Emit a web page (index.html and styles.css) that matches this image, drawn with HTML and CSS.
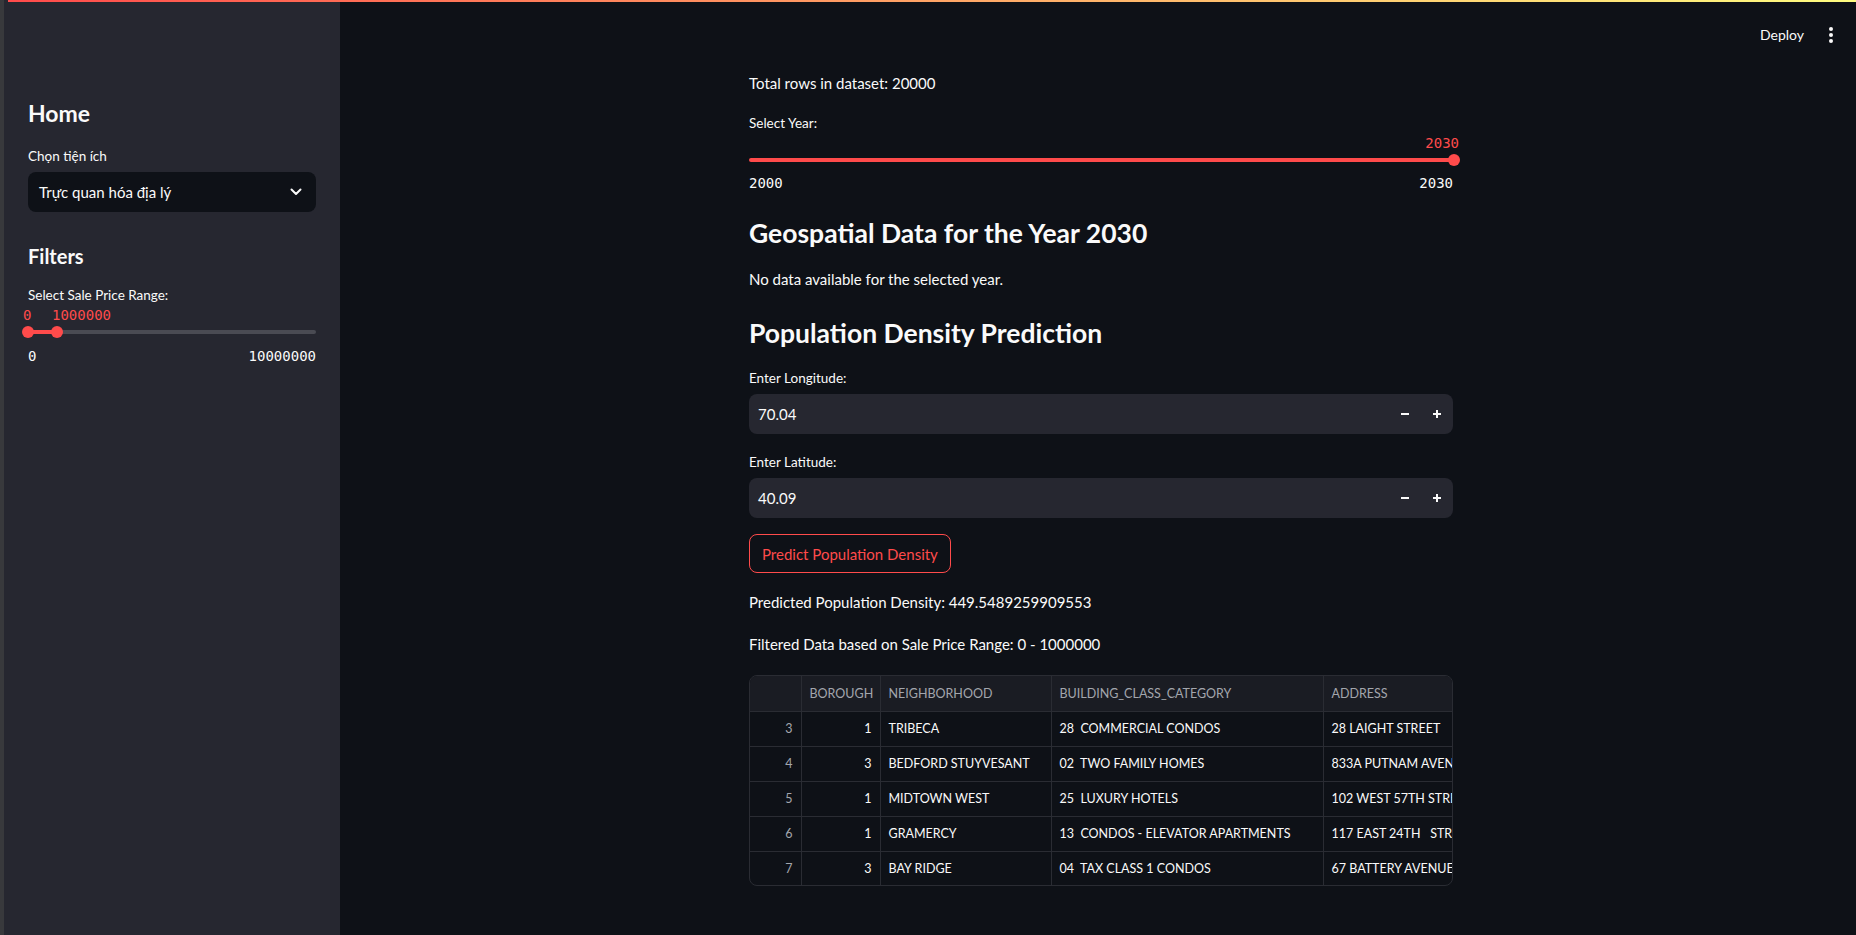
FILE: index.html
```html
<!DOCTYPE html>
<html lang="vi">
<head>
<meta charset="utf-8">
<title>Streamlit</title>
<link rel="stylesheet" href="styles.css">
</head>
<body>
<div class="decoration"></div>
<div class="app">
  <aside class="sidebar">
    <h2 class="side-title">Home</h2>
    <div class="widget-label side-label-first">Chọn tiện ích</div>
    <div class="selectbox">
      <span>Trực quan hóa địa lý</span>
      <svg class="chevron" width="12" height="8" viewBox="0 0 12 8"><path d="M1.5 1.5 L6 6 L10.5 1.5" fill="none" stroke="#fafafa" stroke-width="2" stroke-linecap="round" stroke-linejoin="round"/></svg>
    </div>
    <h2 class="side-title filters">Filters</h2>
    <div class="widget-label side-label-slider">Select Sale Price Range:</div>
    <div class="side-values">
      <span class="val0">0</span>
      <span class="val1">1000000</span>
    </div>
    <div class="side-track">
      <div class="side-fill"></div>
      <div class="thumb side-thumb0"></div>
      <div class="thumb side-thumb1"></div>
    </div>
    <div class="ticks side-ticks"><span>0</span><span>10000000</span></div>
  </aside>
  <main class="main">
    <header class="topbar">
      <span class="deploy">Deploy</span>
      <svg class="kebab" width="6" height="18" viewBox="0 0 6 18"><circle cx="3" cy="3" r="2" fill="#fafafa"/><circle cx="3" cy="9" r="2" fill="#fafafa"/><circle cx="3" cy="15" r="2" fill="#fafafa"/></svg>
    </header>
    <div class="block">
      <p class="text">Total rows in dataset: 20000</p>
      <div class="slider">
        <div class="widget-label">Select Year:</div>
        <div class="slider-value">2030</div>
        <div class="year-track">
          <div class="thumb year-thumb"></div>
        </div>
        <div class="ticks year-ticks"><span>2000</span><span>2030</span></div>
      </div>
      <h3 class="heading h-first">Geospatial Data for the Year 2030</h3>
      <p class="text">No data available for the selected year.</p>
      <h3 class="heading h-second">Population Density Prediction</h3>
      <div class="field">
        <div class="widget-label">Enter Longitude:</div>
        <div class="number-input">
          <span class="num-value">70.04</span>
          <span class="step"><svg width="10" height="10" viewBox="0 0 10 10"><path d="M1 5 H9" stroke="#fafafa" stroke-width="2"/></svg></span>
          <span class="step"><svg width="10" height="10" viewBox="0 0 10 10"><path d="M1 5 H9 M5 1 V9" stroke="#fafafa" stroke-width="2"/></svg></span>
        </div>
      </div>
      <div class="field">
        <div class="widget-label">Enter Latitude:</div>
        <div class="number-input">
          <span class="num-value">40.09</span>
          <span class="step"><svg width="10" height="10" viewBox="0 0 10 10"><path d="M1 5 H9" stroke="#fafafa" stroke-width="2"/></svg></span>
          <span class="step"><svg width="10" height="10" viewBox="0 0 10 10"><path d="M1 5 H9 M5 1 V9" stroke="#fafafa" stroke-width="2"/></svg></span>
        </div>
      </div>
      <div class="btn-row"><button class="btn">Predict Population Density</button></div>
      <p class="text">Predicted Population Density: 449.5489259909553</p>
      <p class="text">Filtered Data based on Sale Price Range: 0 - 1000000</p>
      <div class="table-wrap">
        <table class="df">
          <colgroup>
            <col style="width:51px"><col style="width:79px"><col style="width:171px"><col style="width:272px"><col style="width:200px">
          </colgroup>
          <thead>
            <tr><th></th><th>BOROUGH</th><th>NEIGHBORHOOD</th><th>BUILDING_CLASS_CATEGORY</th><th>ADDRESS</th></tr>
          </thead>
          <tbody>
            <tr><td class="idx">3</td><td class="num">1</td><td>TRIBECA</td><td>28&nbsp; COMMERCIAL CONDOS</td><td>28 LAIGHT STREET</td></tr>
            <tr><td class="idx">4</td><td class="num">3</td><td>BEDFORD STUYVESANT</td><td>02&nbsp; TWO FAMILY HOMES</td><td>833A PUTNAM AVENUE</td></tr>
            <tr><td class="idx">5</td><td class="num">1</td><td>MIDTOWN WEST</td><td>25&nbsp; LUXURY HOTELS</td><td>102 WEST 57TH STREET</td></tr>
            <tr><td class="idx">6</td><td class="num">1</td><td>GRAMERCY</td><td>13&nbsp; CONDOS - ELEVATOR APARTMENTS</td><td>117 EAST 24TH &nbsp; STREET</td></tr>
            <tr><td class="idx">7</td><td class="num">3</td><td>BAY RIDGE</td><td>04&nbsp; TAX CLASS 1 CONDOS</td><td>67 BATTERY AVENUE</td></tr>
          </tbody>
        </table>
      </div>
    </div>
  </main>
</div>
</body>
</html>
```

FILE: styles.css
```css
* { box-sizing: border-box; }
html, body {
  margin: 0;
  padding: 0;
  width: 1856px;
  height: 935px;
  overflow: hidden;
  background: #0e1117;
  color: #fafafa;
  font-family: Lato, "Noto Sans", sans-serif;
}
.decoration {
  position: absolute;
  top: 0;
  left: 8px;
  right: 0;
  height: 2px;
  background: linear-gradient(90deg, #ff4b4b, #fffd80);
  z-index: 5;
}
.app {
  display: flex;
  height: 935px;
  border-left: 4px solid #38393c;
}
.sidebar {
  width: 336px;
  flex: none;
  background: #262730;
  padding: 99px 24px 0 24px;
}
.side-title {
  margin: 0;
  font-size: 23px;
  line-height: 29px;
  font-weight: 700;
}
.filters { font-size: 20px; }
.widget-label {
  font-size: 13.5px;
  line-height: 24px;
  height: 24px;
  margin-bottom: 4px;
}
.side-label-first { margin-top: 16px; }
.selectbox {
  height: 40px;
  background: #0e1117;
  border-radius: 8px;
  display: flex;
  align-items: center;
  justify-content: space-between;
  padding: 0 14px 0 11px;
  font-size: 15px;
}
.filters { margin-top: 30px; }
.side-label-slider { margin-top: 12px; margin-bottom: 0; }
.side-values {
  position: relative;
  height: 16px;
  margin-top: 0;
  font-family: "DejaVu Sans Mono", "Liberation Mono", monospace;
  font-size: 14px;
  line-height: 16px;
  color: #ff4b4b;
}
.side-values .val0 { position: absolute; left: -5px; }
.side-values .val1 { position: absolute; left: 24px; }
.side-track {
  position: relative;
  height: 4px;
  margin-top: 7px;
  background: #4a4b53;
  border-radius: 2px;
}
.side-fill {
  position: absolute;
  left: 0;
  width: 29px;
  top: 0;
  height: 4px;
  background: #ff4b4b;
}
.thumb {
  position: absolute;
  width: 12px;
  height: 12px;
  border-radius: 50%;
  background: #ff4b4b;
  top: -4px;
}
.side-thumb0 { left: -6px; }
.side-thumb1 { left: 23px; }
.ticks {
  display: flex;
  justify-content: space-between;
  font-family: "DejaVu Sans Mono", "Liberation Mono", monospace;
  font-size: 14px;
  line-height: 16px;
  height: 16px;
}
.side-ticks { margin-top: 14px; }

.main {
  flex: 1;
  display: flex;
  flex-direction: column;
  padding-left: 6px;
}
.topbar {
  height: 60px;
  display: flex;
  align-items: center;
  justify-content: flex-end;
  padding: 9px 22px 0 0;
  gap: 24px;
}
.deploy { font-size: 14px; }
.block {
  width: 704px;
  margin: 0 auto;
  padding-top: 10px;
  display: flex;
  flex-direction: column;
  gap: 16px;
}
.text {
  margin: 0;
  font-size: 15px;
  line-height: 26px;
}
.slider { display: flex; flex-direction: column; }
.slider .widget-label { margin-bottom: 0; height: 22px; line-height: 22px; }
.slider-value {
  text-align: right;
  font-family: "DejaVu Sans Mono", "Liberation Mono", monospace;
  font-size: 14px;
  line-height: 16px;
  height: 16px;
  color: #ff4b4b;
  margin-top: 1px;
  margin-right: -6px;
}
.year-track {
  position: relative;
  height: 4px;
  margin-top: 7px;
  background: #ff4b4b;
  border-radius: 2px;
}
.year-thumb { right: -7px; }
.year-ticks { margin-top: 13px; }
.heading {
  margin: 0;
  font-size: 26.5px;
  line-height: 34px;
  font-weight: 700;
}
.h-first { margin-top: 9px; }
.h-second { margin-top: 8px; }
.number-input {
  height: 40px;
  background: #262730;
  border-radius: 8px;
  display: flex;
  align-items: center;
  padding-left: 9px;
}
.num-value { flex: 1; font-size: 15px; }
.step {
  width: 32px;
  height: 40px;
  display: flex;
  align-items: center;
  justify-content: center;
}
.btn-row { display: flex; }
.btn {
  height: 39px;
  padding: 0 12px;
  background: transparent;
  color: #ff4b4b;
  border: 1px solid #ff4b4b;
  border-radius: 8px;
  font-family: Lato, "Noto Sans", sans-serif;
  font-size: 15px;
}
.table-wrap {
  height: 211px;
  margin-top: 2px;
  border: 1px solid #2a2c33;
  border-radius: 8px;
  overflow: hidden;
}
.df {
  border-collapse: collapse;
  table-layout: fixed;
  width: 773px;
  font-size: 12.5px;
}
.df th, .df td {
  height: 35px;
  padding: 0 8px;
  white-space: nowrap;
  overflow: hidden;
  text-align: left;
  border-left: 1px solid #2a2c33;
  border-top: 1px solid #2a2c33;
}
.df th {
  background: #1a1c23;
  color: #a3a6ad;
  font-weight: 400;
  border-top: none;
}
.df tr > :first-child { border-left: none; }
.df td.idx { text-align: right; color: #a3a6ad; }
.df td.num { text-align: right; }
```
